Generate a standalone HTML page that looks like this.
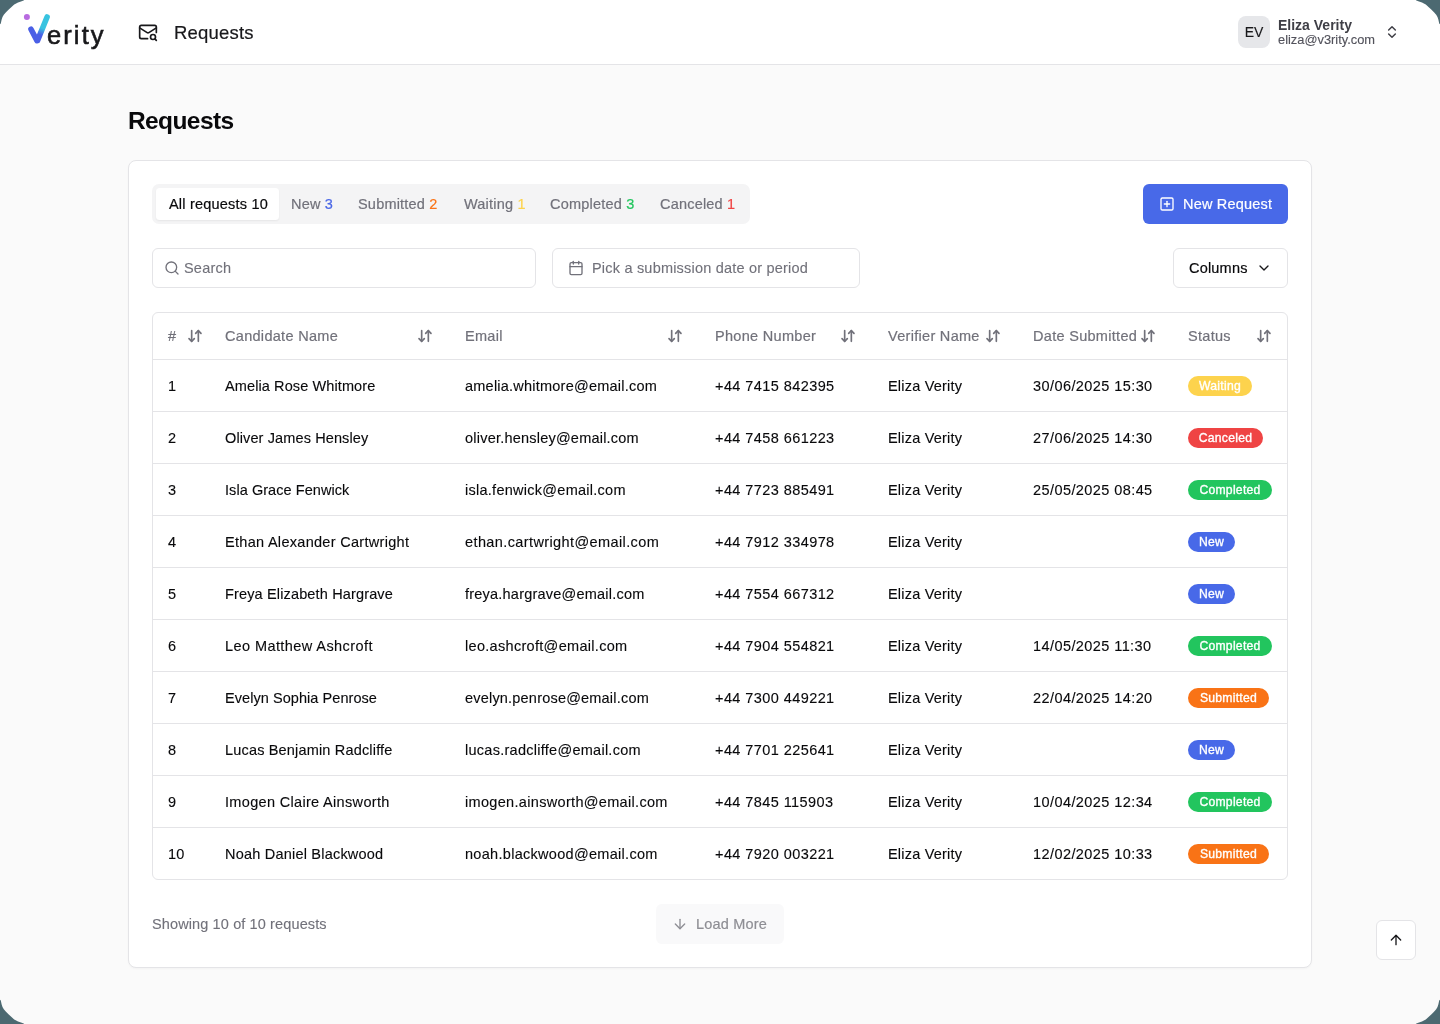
<!DOCTYPE html>
<html><head><meta charset="utf-8"><title>Requests</title>
<style>
*{box-sizing:border-box;margin:0;padding:0}
html,body{width:1440px;height:1024px;overflow:hidden}
body{position:relative;background:#fafafa;font-family:"Liberation Sans",sans-serif;color:#09090b;-webkit-font-smoothing:antialiased}
.abs{position:absolute}
.t{position:absolute;will-change:transform;white-space:nowrap;line-height:20px;font-size:14.5px;letter-spacing:.2px;-webkit-text-stroke:.12px currentColor}
.ls3{letter-spacing:.3px}.med{-webkit-text-stroke:.2px currentColor}.ls4{letter-spacing:.42px}
#hdr{position:absolute;left:0;top:0;width:1440px;height:65px;background:#fff;border-bottom:1px solid #e4e4e7}
#card{position:absolute;left:128px;top:160px;width:1184px;height:808px;background:#fff;border:1px solid #e4e4e7;border-radius:8px;box-shadow:0 1px 2px rgba(0,0,0,.03)}
.tabs{position:absolute;left:152px;top:184px;width:598px;height:40px;background:#f4f4f5;border-radius:7px}
.tab-active{position:absolute;left:156px;top:188px;width:123px;height:32px;background:#fff;border-radius:3.5px;box-shadow:0 1px 2px rgba(0,0,0,.06)}
.muted{color:#71717a}
.inp{position:absolute;height:40px;background:#fff;border:1px solid #e4e4e7;border-radius:6px}
#tbl{position:absolute;left:152px;top:312px;width:1136px;height:568px;border:1px solid #e4e4e7;border-radius:6px;overflow:hidden}
.rowb{position:absolute;left:153px;width:1134px;height:1px;background:#e4e4e7}
.badge{position:absolute;left:1188px;height:20px;border-radius:10px;color:#fff;font-weight:400;font-size:12.2px;letter-spacing:.25px;-webkit-text-stroke:.35px #fff;line-height:20px;text-align:center;white-space:nowrap;will-change:transform}
svg.i{position:absolute;fill:none;stroke:currentColor;stroke-width:2;stroke-linecap:round;stroke-linejoin:round}
</style></head><body>
<!-- header -->
<div id="hdr"></div>
<svg class="abs" style="left:0;top:0" width="120" height="64" viewBox="0 0 120 64">
  <defs><linearGradient id="vg" gradientUnits="userSpaceOnUse" x1="37" y1="41" x2="42" y2="28"><stop offset="0" stop-color="#4a5fe6"/><stop offset="0.5" stop-color="#4a5fe6"/><stop offset="1" stop-color="#38c3e0"/></linearGradient></defs>
  <circle cx="26.9" cy="16.9" r="3" fill="#b86be0"/>
  <path d="M31 29.3 L37 40.6" stroke="#4a5fe6" stroke-width="5.6" stroke-linecap="round" fill="none"/>
  <path d="M47.1 17 L37.6 40.4" stroke="url(#vg)" stroke-width="5.6" stroke-linecap="round" fill="none"/>
</svg>
<div class="t" style="left:46.5px;top:20px;font-size:25.5px;line-height:30px;letter-spacing:2.1px;color:#18181b;-webkit-text-stroke:.6px #18181b">erity</div>
<svg class="i" style="left:138px;top:22px;color:#18181b" width="20" height="20" viewBox="0 0 24 24"><path d="M22 12.5V6a2 2 0 0 0-2-2H4a2 2 0 0 0-2 2v12c0 1.1.9 2 2 2h7.5"/><path d="m22 7-8.97 5.7a1.94 1.94 0 0 1-2.06 0L2 7"/><circle cx="18" cy="18" r="3"/><path d="m22 22-1.5-1.5"/></svg>
<div class="t med" style="left:174px;top:22px;font-size:18.5px;line-height:22px;letter-spacing:.2px;color:#18181b">Requests</div>

<div class="abs" style="left:1238px;top:16px;width:32px;height:32px;border-radius:8px;background:#e6e7ea"></div>
<div class="t" style="left:1238px;top:22px;width:32px;text-align:center;font-size:14px;letter-spacing:0;color:#18181b">EV</div>
<div class="t" style="left:1278px;top:15px;font-size:14px;letter-spacing:0;font-weight:700;color:#3f3f46;-webkit-text-stroke:0">Eliza Verity</div>
<div class="t" style="left:1278px;top:31px;font-size:12.85px;letter-spacing:0;line-height:18px;color:#52525b">eliza@v3rity.com</div>
<svg class="i" style="left:1384px;top:24px;color:#3f3f46;stroke-width:2.2" width="16" height="16" viewBox="0 0 24 24"><path d="m7 15 5 5 5-5"/><path d="m7 9 5-5 5 5"/></svg>

<!-- title -->
<div class="t" style="left:128px;top:106px;font-size:24.5px;line-height:30px;font-weight:700;letter-spacing:-.6px;-webkit-text-stroke:0">Requests</div>

<!-- card -->
<div id="card"></div>
<div class="tabs"></div>
<div class="tab-active"></div>
<div class="t med" style="left:169px;top:194px">All requests 10</div>
<div class="t muted med" style="left:291px;top:194px">New <span style="color:#4a67e6">3</span></div>
<div class="t muted med" style="left:358px;top:194px">Submitted <span style="color:#f97316">2</span></div>
<div class="t muted med" style="left:464px;top:194px">Waiting <span style="color:#fcd34d">1</span></div>
<div class="t muted med" style="left:550px;top:194px">Completed <span style="color:#22c55e">3</span></div>
<div class="t muted med" style="left:660px;top:194px">Canceled <span style="color:#ef4444">1</span></div>

<div class="abs" style="left:1143px;top:184px;width:145px;height:40px;background:#4869e8;border-radius:6px"></div>
<svg class="i" style="left:1159px;top:196px;color:#fff" width="16" height="16" viewBox="0 0 24 24"><rect width="18" height="18" x="3" y="3" rx="2"/><path d="M8 12h8"/><path d="M12 8v8"/></svg>
<div class="t med" style="left:1183px;top:194px;color:#fff">New Request</div>

<div class="inp" style="left:152px;top:248px;width:384px"></div>
<svg class="i" style="left:164px;top:260px;color:#71717a" width="16" height="16" viewBox="0 0 24 24"><circle cx="11" cy="11" r="8"/><path d="m21 21-4.3-4.3"/></svg>
<div class="t muted" style="left:184px;top:258px">Search</div>

<div class="inp" style="left:552px;top:248px;width:308px"></div>
<svg class="i" style="left:568px;top:260px;color:#71717a" width="16" height="16" viewBox="0 0 24 24"><path d="M8 2v4"/><path d="M16 2v4"/><rect width="18" height="18" x="3" y="4" rx="2"/><path d="M3 10h18"/></svg>
<div class="t muted" style="left:592px;top:258px">Pick a submission date or period</div>

<div class="inp" style="left:1173px;top:248px;width:115px"></div>
<div class="t med" style="left:1189px;top:258px">Columns</div>
<svg class="i" style="left:1256px;top:260px;color:#18181b" width="16" height="16" viewBox="0 0 24 24"><path d="m6 9 6 6 6-6"/></svg>
<div id="tbl"></div>
<div class="rowb" style="top:359px"></div>
<div class="rowb" style="top:411px"></div>
<div class="rowb" style="top:463px"></div>
<div class="rowb" style="top:515px"></div>
<div class="rowb" style="top:567px"></div>
<div class="rowb" style="top:619px"></div>
<div class="rowb" style="top:671px"></div>
<div class="rowb" style="top:723px"></div>
<div class="rowb" style="top:775px"></div>
<div class="rowb" style="top:827px"></div>
<div class="t muted ls3 med" style="left:168px;top:326px">#</div>
<div class="t muted ls3 med" style="left:225px;top:326px">Candidate Name</div>
<div class="t muted ls3 med" style="left:465px;top:326px">Email</div>
<div class="t muted ls3 med" style="left:715px;top:326px">Phone Number</div>
<div class="t muted ls3 med" style="left:888px;top:326px">Verifier Name</div>
<div class="t muted ls3 med" style="left:1033px;top:326px">Date Submitted</div>
<div class="t muted ls3 med" style="left:1188px;top:326px">Status</div>
<svg class="i" style="left:187px;top:328px;color:#71717a;stroke-width:2.5" width="16" height="16" viewBox="0 0 24 24"><path d="m3 16 4 4 4-4"/><path d="M7 20V4"/><path d="m21 8-4-4-4 4"/><path d="M17 4v16"/></svg>
<svg class="i" style="left:417px;top:328px;color:#71717a;stroke-width:2.5" width="16" height="16" viewBox="0 0 24 24"><path d="m3 16 4 4 4-4"/><path d="M7 20V4"/><path d="m21 8-4-4-4 4"/><path d="M17 4v16"/></svg>
<svg class="i" style="left:667px;top:328px;color:#71717a;stroke-width:2.5" width="16" height="16" viewBox="0 0 24 24"><path d="m3 16 4 4 4-4"/><path d="M7 20V4"/><path d="m21 8-4-4-4 4"/><path d="M17 4v16"/></svg>
<svg class="i" style="left:840px;top:328px;color:#71717a;stroke-width:2.5" width="16" height="16" viewBox="0 0 24 24"><path d="m3 16 4 4 4-4"/><path d="M7 20V4"/><path d="m21 8-4-4-4 4"/><path d="M17 4v16"/></svg>
<svg class="i" style="left:985px;top:328px;color:#71717a;stroke-width:2.5" width="16" height="16" viewBox="0 0 24 24"><path d="m3 16 4 4 4-4"/><path d="M7 20V4"/><path d="m21 8-4-4-4 4"/><path d="M17 4v16"/></svg>
<svg class="i" style="left:1140px;top:328px;color:#71717a;stroke-width:2.5" width="16" height="16" viewBox="0 0 24 24"><path d="m3 16 4 4 4-4"/><path d="M7 20V4"/><path d="m21 8-4-4-4 4"/><path d="M17 4v16"/></svg>
<svg class="i" style="left:1256px;top:328px;color:#71717a;stroke-width:2.5" width="16" height="16" viewBox="0 0 24 24"><path d="m3 16 4 4 4-4"/><path d="M7 20V4"/><path d="m21 8-4-4-4 4"/><path d="M17 4v16"/></svg>
<div class="t" style="left:168px;top:376px">1</div>
<div class="t" style="left:225px;top:376px;letter-spacing:0.105px">Amelia Rose Whitmore</div>
<div class="t" style="left:465px;top:376px;letter-spacing:0.225px">amelia.whitmore@email.com</div>
<div class="t ls4" style="left:715px;top:376px">+44 7415 842395</div>
<div class="t" style="left:888px;top:376px">Eliza Verity</div>
<div class="t ls4" style="left:1033px;top:376px">30/06/2025 15:30</div>
<div class="badge" style="top:376px;width:64px;background:#fdd34d">Waiting</div>
<div class="t" style="left:168px;top:428px">2</div>
<div class="t" style="left:225px;top:428px;letter-spacing:0.116px">Oliver James Hensley</div>
<div class="t" style="left:465px;top:428px;letter-spacing:0.218px">oliver.hensley@email.com</div>
<div class="t ls4" style="left:715px;top:428px">+44 7458 661223</div>
<div class="t" style="left:888px;top:428px">Eliza Verity</div>
<div class="t ls4" style="left:1033px;top:428px">27/06/2025 14:30</div>
<div class="badge" style="top:428px;width:75px;background:#ef4444">Canceled</div>
<div class="t" style="left:168px;top:480px">3</div>
<div class="t" style="left:225px;top:480px;letter-spacing:0.059px">Isla Grace Fenwick</div>
<div class="t" style="left:465px;top:480px;letter-spacing:0.267px">isla.fenwick@email.com</div>
<div class="t ls4" style="left:715px;top:480px">+44 7723 885491</div>
<div class="t" style="left:888px;top:480px">Eliza Verity</div>
<div class="t ls4" style="left:1033px;top:480px">25/05/2025 08:45</div>
<div class="badge" style="top:480px;width:84px;background:#22c55e">Completed</div>
<div class="t" style="left:168px;top:532px">4</div>
<div class="t" style="left:225px;top:532px;letter-spacing:0.296px">Ethan Alexander Cartwright</div>
<div class="t" style="left:465px;top:532px;letter-spacing:0.392px">ethan.cartwright@email.com</div>
<div class="t ls4" style="left:715px;top:532px">+44 7912 334978</div>
<div class="t" style="left:888px;top:532px">Eliza Verity</div>
<div class="badge" style="top:532px;width:47px;background:#4869e8">New</div>
<div class="t" style="left:168px;top:584px">5</div>
<div class="t" style="left:225px;top:584px;letter-spacing:0.148px">Freya Elizabeth Hargrave</div>
<div class="t" style="left:465px;top:584px;letter-spacing:0.218px">freya.hargrave@email.com</div>
<div class="t ls4" style="left:715px;top:584px">+44 7554 667312</div>
<div class="t" style="left:888px;top:584px">Eliza Verity</div>
<div class="badge" style="top:584px;width:47px;background:#4869e8">New</div>
<div class="t" style="left:168px;top:636px">6</div>
<div class="t" style="left:225px;top:636px;letter-spacing:0.421px">Leo Matthew Ashcroft</div>
<div class="t" style="left:465px;top:636px;letter-spacing:0.305px">leo.ashcroft@email.com</div>
<div class="t ls4" style="left:715px;top:636px">+44 7904 554821</div>
<div class="t" style="left:888px;top:636px">Eliza Verity</div>
<div class="t ls4" style="left:1033px;top:636px">14/05/2025 11:30</div>
<div class="badge" style="top:636px;width:84px;background:#22c55e">Completed</div>
<div class="t" style="left:168px;top:688px">7</div>
<div class="t" style="left:225px;top:688px;letter-spacing:0.06px">Evelyn Sophia Penrose</div>
<div class="t" style="left:465px;top:688px;letter-spacing:0.2px">evelyn.penrose@email.com</div>
<div class="t ls4" style="left:715px;top:688px">+44 7300 449221</div>
<div class="t" style="left:888px;top:688px">Eliza Verity</div>
<div class="t ls4" style="left:1033px;top:688px">22/04/2025 14:20</div>
<div class="badge" style="top:688px;width:81px;background:#f97316">Submitted</div>
<div class="t" style="left:168px;top:740px">8</div>
<div class="t" style="left:225px;top:740px;letter-spacing:0.174px">Lucas Benjamin Radcliffe</div>
<div class="t" style="left:465px;top:740px;letter-spacing:0.267px">lucas.radcliffe@email.com</div>
<div class="t ls4" style="left:715px;top:740px">+44 7701 225641</div>
<div class="t" style="left:888px;top:740px">Eliza Verity</div>
<div class="badge" style="top:740px;width:47px;background:#4869e8">New</div>
<div class="t" style="left:168px;top:792px">9</div>
<div class="t" style="left:225px;top:792px;letter-spacing:0.327px">Imogen Claire Ainsworth</div>
<div class="t" style="left:465px;top:792px;letter-spacing:0.32px">imogen.ainsworth@email.com</div>
<div class="t ls4" style="left:715px;top:792px">+44 7845 115903</div>
<div class="t" style="left:888px;top:792px">Eliza Verity</div>
<div class="t ls4" style="left:1033px;top:792px">10/04/2025 12:34</div>
<div class="badge" style="top:792px;width:84px;background:#22c55e">Completed</div>
<div class="t" style="left:168px;top:844px">10</div>
<div class="t" style="left:225px;top:844px;letter-spacing:0.21px">Noah Daniel Blackwood</div>
<div class="t" style="left:465px;top:844px;letter-spacing:0.296px">noah.blackwood@email.com</div>
<div class="t ls4" style="left:715px;top:844px">+44 7920 003221</div>
<div class="t" style="left:888px;top:844px">Eliza Verity</div>
<div class="t ls4" style="left:1033px;top:844px">12/02/2025 10:33</div>
<div class="badge" style="top:844px;width:81px;background:#f97316">Submitted</div>
<div class="t muted" style="left:152px;top:914px;letter-spacing:.12px">Showing 10 of 10 requests</div>
<div class="abs" style="left:656px;top:904px;width:128px;height:40px;background:#f4f4f5;opacity:.5;border-radius:6px"></div>
<svg class="i" style="left:672px;top:916px;color:#8e8e94" width="16" height="16" viewBox="0 0 24 24"><path d="M12 5v14"/><path d="m19 12-7 7-7-7"/></svg>
<div class="t med" style="left:696px;top:914px;color:#8e8e94">Load More</div>

<div class="abs" style="left:1376px;top:920px;width:40px;height:40px;background:#fff;border:1px solid #e4e4e7;border-radius:6px"></div>
<svg class="i" style="left:1388px;top:932px;color:#18181b" width="16" height="16" viewBox="0 0 24 24"><path d="m5 12 7-7 7 7"/><path d="M12 19V5"/></svg>

<svg class="abs" style="left:0;top:0" width="1440" height="1024" viewBox="0 0 1440 1024" fill="#4c6971">
<polygon points="0.00,0.00 24.20,0.00 23.60,0.40 21.00,1.50 18.00,2.60 16.10,3.60 14.20,4.60 11.50,7.10 8.75,9.60 6.00,12.30 3.80,14.80 2.50,17.00 1.60,19.70 0.80,23.50 0.00,24.20"/>
<polygon points="1440.00,0.00 1415.80,0.00 1416.40,0.40 1419.00,1.50 1422.00,2.60 1423.90,3.60 1425.80,4.60 1428.50,7.10 1431.25,9.60 1434.00,12.30 1436.20,14.80 1437.50,17.00 1438.40,19.70 1439.20,23.50 1440.00,24.20"/>
<polygon points="0.00,1024.00 24.20,1024.00 23.60,1023.60 21.00,1022.50 18.00,1021.40 16.10,1020.40 14.20,1019.40 11.50,1016.90 8.75,1014.40 6.00,1011.70 3.80,1009.20 2.50,1007.00 1.60,1004.30 0.80,1000.50 0.00,999.80"/>
<polygon points="1440.00,1024.00 1415.80,1024.00 1416.40,1023.60 1419.00,1022.50 1422.00,1021.40 1423.90,1020.40 1425.80,1019.40 1428.50,1016.90 1431.25,1014.40 1434.00,1011.70 1436.20,1009.20 1437.50,1007.00 1438.40,1004.30 1439.20,1000.50 1440.00,999.80"/>
</svg>
</body></html>
